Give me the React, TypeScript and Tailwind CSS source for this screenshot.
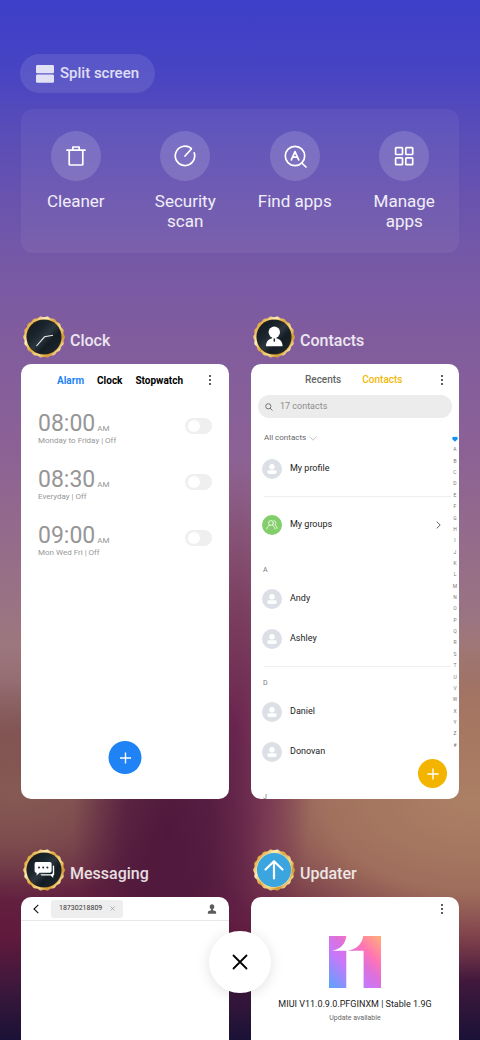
import type { ReactNode } from "react";

const alarms = [
  { time: "08:00", repeat: "Monday to Friday | Off" },
  { time: "08:30", repeat: "Everyday | Off" },
  { time: "09:00", repeat: "Mon Wed Fri | Off" },
];

const letters = "ABCDEFGHIJKLMNOPQRSTUVWXYZ#".split("");

// wavy outline of the gold badge, 18 bumps around a 42px box
const badgePoints = Array.from({ length: 180 }, (_, i) => {
  const angle = (i / 180) * Math.PI * 2;
  const radius = 20.3 + 0.5 * Math.cos(angle * 18);
  return `${(21 + radius * Math.cos(angle)).toFixed(2)},${(21 + radius * Math.sin(angle)).toFixed(2)}`;
}).join(" ");

const Badge = ({ id, blue, children }: { id: string; blue?: boolean; children: ReactNode }) => (
  <svg viewBox="0 0 42 42" className="size-[42px] shrink-0" aria-hidden="true">
    <defs>
      <linearGradient id={`${id}-gold`} x1="0" y1="0.1" x2="1" y2="0.9">
        <stop offset="0" stopColor="#c98a26" />
        <stop offset="0.14" stopColor="#e6b04a" />
        <stop offset="0.3" stopColor="#fff0b8" />
        <stop offset="0.45" stopColor="#dba53a" />
        <stop offset="0.62" stopColor="#f7dc8c" />
        <stop offset="0.78" stopColor="#d3962c" />
        <stop offset="0.9" stopColor="#ffeeb0" />
        <stop offset="1" stopColor="#c98a26" />
      </linearGradient>
      <linearGradient id={`${id}-dark`} x1="0" y1="0" x2="1" y2="1">
        <stop offset="0" stopColor="#10171d" />
        <stop offset="0.35" stopColor="#1b252d" />
        <stop offset="0.5" stopColor="#2b363e" />
        <stop offset="0.65" stopColor="#151d24" />
        <stop offset="1" stopColor="#1d272f" />
      </linearGradient>
    </defs>
    <polygon points={badgePoints} fill={`url(#${id}-gold)`} />
    <circle cx="21" cy="21" r="17.6" fill={blue ? "#f6e3a4" : "#3a2c12"} />
    <circle cx="21" cy="21" r="17.1" fill={blue ? "#3aa5df" : `url(#${id}-dark)`} />
    {children}
  </svg>
);

const Shortcut = ({ label, children }: { label: string; children: ReactNode }) => (
  <button type="button" className="flex flex-col items-center gap-2.5 text-[17px] leading-5 text-white/90">
    <span className="flex size-[50px] items-center justify-center rounded-full bg-white/15">
      <svg
        viewBox="0 0 24 24"
        className="size-6"
        fill="none"
        stroke="#fff"
        strokeWidth="1.7"
        strokeLinecap="round"
        strokeLinejoin="round"
        aria-hidden="true"
      >
        {children}
      </svg>
    </span>
    <span className="w-20">{label}</span>
  </button>
);

const AppWindow = ({ title, icon, children }: { title: string; icon: ReactNode; children: ReactNode }) => (
  <section>
    <div className="flex items-center gap-[5px] pl-0.5">
      {icon}
      <h2 className="pt-2 text-base font-medium text-white/85">{title}</h2>
    </div>
    <div className="relative mt-1.5 aspect-[208/435] overflow-hidden rounded-[10px] bg-white">{children}</div>
  </section>
);

const MoreButton = () => (
  <button type="button" aria-label="More" className="ml-auto flex h-full items-center">
    <svg viewBox="0 0 6 12" className="h-3 w-1.5" fill="#111" aria-hidden="true">
      <circle cx="3" cy="2" r="0.9" />
      <circle cx="3" cy="6" r="0.9" />
      <circle cx="3" cy="10" r="0.9" />
    </svg>
  </button>
);

const Plus = () => (
  <svg viewBox="0 0 12 12" className="size-3" stroke="#fff" strokeWidth="1.4" aria-hidden="true">
    <path d="M6 0.4V11.6M0.4 6H11.6" />
  </svg>
);

const Person = ({ name }: { name: string }) => (
  <li className="flex h-10 items-center gap-2 pl-[11px] text-[9px] text-[#222]">
    <svg viewBox="0 0 20 20" className="size-5" aria-hidden="true">
      <circle cx="10" cy="10" r="10" fill="#dcdfe5" />
      <circle cx="10" cy="7.7" r="2.7" fill="#fff" />
      <rect x="5.2" y="11.3" width="9.6" height="3.6" rx="1.8" fill="#fff" />
    </svg>
    {name}
  </li>
);

const SectionLetter = ({ letter }: { letter: string }) => (
  <h3 className="pl-3 text-[7px] leading-[17px] text-[#777]">{letter}</h3>
);

const ClockWindow = () => (
  <>
    <div className="flex h-8 items-center pr-4 pl-9 text-[10px] font-bold text-black">
      <div className="flex gap-[13px]">
        <button type="button" className="text-[#1e83f7]">Alarm</button>
        <button type="button">Clock</button>
        <button type="button">Stopwatch</button>
      </div>
      <MoreButton />
    </div>
    <ul className="pt-[5px]">
      {alarms.map((alarm) => (
        <li key={alarm.time}>
          <label className="flex h-14 items-center justify-between px-[17px] text-[#969696]">
            <span>
              <span className="flex items-baseline gap-0.5 text-[23px] leading-6">
                {alarm.time}
                <span className="text-[8px] leading-3">AM</span>
              </span>
              <span className="block text-[8px] leading-[10px]">{alarm.repeat}</span>
            </span>
            <input
              type="checkbox"
              role="switch"
              className="mb-1.5 h-4 w-[27px] appearance-none rounded-full bg-[#efefef] p-0.5 before:ml-px before:block before:size-3 before:rounded-full before:bg-white checked:bg-[#1e83f7] checked:before:ml-auto"
            />
          </label>
        </li>
      ))}
    </ul>
    <button
      type="button"
      aria-label="Add alarm"
      className="absolute bottom-[25px] left-1/2 flex size-[33px] -translate-x-1/2 items-center justify-center rounded-full bg-[#1f82f5]"
    >
      <Plus />
    </button>
  </>
);

const ContactsWindow = () => (
  <>
    <div className="flex h-[31px] items-center pr-3.5 pl-[54px] text-[10px] font-medium">
      <div className="flex gap-[21px]">
        <button type="button" className="text-[#666]">Recents</button>
        <button type="button" className="text-[#f4b806]">Contacts</button>
      </div>
      <MoreButton />
    </div>
    <label className="mx-[7px] flex h-[23px] items-center gap-[7px] rounded-full bg-[#ececec] pl-[7px]">
      <svg viewBox="0 0 8 8" className="size-2 shrink-0" fill="none" stroke="#666" strokeWidth="0.9" aria-hidden="true">
        <circle cx="3.3" cy="3.3" r="2.6" />
        <path d="M5.2 5.2L7.5 7.5" />
      </svg>
      <input
        type="text"
        aria-label="Search contacts"
        placeholder="17 contacts"
        className="w-full bg-transparent text-[9px] text-[#444] outline-none placeholder:text-[#8c8c8c]"
      />
    </label>
    <button type="button" className="mt-3 ml-[13px] flex h-4 items-center gap-[3px] text-[8px] text-[#666]">
      All contacts
      <svg viewBox="0 0 8 5" className="h-[5px] w-2" fill="none" stroke="#aaa" strokeWidth="0.7" aria-hidden="true">
        <path d="M0.5 0.5L4 4.2L7.5 0.5" />
      </svg>
    </button>
    <ul className="mt-[3px]">
      <Person name="My profile" />
    </ul>
    <div className="mt-[7px] mr-2 ml-[13px] border-t border-[#eee]" />
    <button type="button" className="mt-2 flex h-10 w-full items-center gap-2 pr-[18px] pl-[11px] text-[9px] text-[#222]">
      <svg viewBox="0 0 20 20" className="size-5" aria-hidden="true">
        <circle cx="10" cy="10" r="10" fill="#83ce6b" />
        <g fill="none" stroke="#fff" strokeWidth="0.8" strokeLinecap="round">
          <circle cx="9" cy="8" r="2.4" />
          <path d="M4.8 14C5 12 6.2 10.9 7.6 10.2M13.2 14C13 12 11.8 10.9 10.4 10.2M12 5.7C14.2 5.8 14.5 8.8 12.8 9.7C14.2 10.4 15 11.8 15.2 13.4" />
        </g>
      </svg>
      My groups
      <svg viewBox="0 0 5 8" className="ml-auto h-2 w-[5px]" fill="none" stroke="#555" strokeWidth="0.9" aria-hidden="true">
        <path d="M0.7 0.6L4.2 4L0.7 7.4" />
      </svg>
    </button>
    <div className="mt-[17px]">
      <SectionLetter letter="A" />
      <ul>
        <Person name="Andy" />
        <Person name="Ashley" />
      </ul>
    </div>
    <div className="mt-[7px] mr-2 ml-[13px] border-t border-[#eee]" />
    <div className="mt-2">
      <SectionLetter letter="D" />
      <ul>
        <Person name="Daniel" />
        <Person name="Donovan" />
      </ul>
    </div>
    <div className="mt-[17px]">
      <SectionLetter letter="J" />
    </div>
    <div className="absolute top-[70px] right-0 bottom-12 flex w-2 flex-col items-center justify-between text-[5px] leading-[11px] text-[#777]">
      <svg viewBox="0 0 6 6" className="my-0.5 size-1.5" fill="#1495f2" aria-hidden="true">
        <path d="M3 5.8L0.6 3.4C-0.6 2 0.9 -0.3 3 1.1C5.1 -0.3 6.6 2 5.4 3.4Z" />
      </svg>
      {letters.map((letter) => (
        <span key={letter}>{letter}</span>
      ))}
    </div>
    <button
      type="button"
      aria-label="Add contact"
      className="absolute right-3 bottom-[11px] flex size-[29px] items-center justify-center rounded-full bg-[#f3b400]"
    >
      <Plus />
    </button>
  </>
);

const MessagingWindow = () => (
  <div className="flex h-6 items-center border-b border-[#e8e8e8] px-3">
    <button type="button" aria-label="Back">
      <svg viewBox="0 0 6 10" className="h-2.5 w-1.5" fill="none" stroke="#111" strokeWidth="1.1" aria-hidden="true">
        <path d="M5.3 0.8L1 5L5.3 9.2" />
      </svg>
    </button>
    <div className="ml-3 flex h-[18px] items-center gap-2 rounded-[3px] bg-[#eee] px-2 text-[7px] text-[#333]">
      18730218809
      <button type="button" aria-label="Remove recipient">
        <svg viewBox="0 0 5 5" className="size-[5px]" stroke="#888" strokeWidth="0.6" aria-hidden="true">
          <path d="M0.4 0.4L4.6 4.6M4.6 0.4L0.4 4.6" />
        </svg>
      </button>
    </div>
    <button type="button" aria-label="Contact details" className="ml-auto">
      <svg viewBox="0 0 10 10" className="size-2.5" fill="#5c5c5c" aria-hidden="true">
        <path d="M5 0.2C3.6 0.2 2.7 1.3 2.7 2.7C2.7 3.7 3.3 4.8 4.1 5.2V6.2L1.6 7C1.1 7.3 0.8 8.4 0.8 9.8H9.2C9.2 8.4 8.9 7.3 8.4 7L5.9 6.2V5.2C6.7 4.8 7.3 3.7 7.3 2.7C7.3 1.3 6.4 0.2 5 0.2Z" />
      </svg>
    </button>
  </div>
);

const UpdaterWindow = () => (
  <>
    <div className="flex h-6 pr-3.5">
      <MoreButton />
    </div>
    <div className="mt-[15px] flex flex-col items-center">
      <svg viewBox="0 0 52 52" className="size-[52px]" role="img" aria-label="MIUI 11">
        <defs>
          <linearGradient id="miui" x1="0" y1="1" x2="1" y2="0">
            <stop offset="0" stopColor="#58a4ff" />
            <stop offset="0.38" stopColor="#c878fa" />
            <stop offset="0.55" stopColor="#dc70dc" />
            <stop offset="0.72" stopColor="#ff74b4" />
            <stop offset="1" stopColor="#ffb077" />
          </linearGradient>
        </defs>
        <path
          fill="url(#miui)"
          d="M0 0H17.3C16.5 8 11 13.7 3 14.7H17.3V52H0ZM34.3 0H52V52H34.6V14.7H18.7C27 13.7 33 8 34.3 0Z"
        />
      </svg>
      <p className="mt-2.5 text-[9px] leading-3 whitespace-nowrap text-[#222]">MIUI V11.0.9.0.PFGINXM | Stable 1.9G</p>
      <p className="mt-0.5 text-[7px] leading-3 text-[#666]">Update available</p>
    </div>
  </>
);

const App = () => {
  return (
    <main className="relative h-screen overflow-hidden bg-[radial-gradient(ellipse_95px_190px_at_35%_80%,#4d173cf2_0%,#4d173cc0_45%,transparent_100%),radial-gradient(ellipse_80px_270px_at_49%_70%,#6c2751_0%,#6c2751b0_45%,transparent_100%),radial-gradient(ellipse_285px_180px_at_98%_77%,#ab8064_0%,#a87860e0_50%,transparent_100%),radial-gradient(ellipse_170px_110px_at_3%_76%,#865a54_0%,#80534fc0_50%,transparent_100%),linear-gradient(180deg,#3d3fca_0%,#4844c2_7%,#5a4db7_13%,#7257a9_23%,#805c9e_32%,#8b6196_43%,#946a8c_51%,#9d777e_62%,#8f666a_68%,#79404f_77%,#632340_85%,#611a3d_90%,#3c183c_95%,#1a1136_100%)] px-[21px] pt-[54px] font-['Roboto',sans-serif]">
      <button
        type="button"
        className="-ml-px flex h-[39px] items-center gap-1.5 rounded-full bg-white/10 px-4 text-[15px] font-medium text-white/80"
      >
        <svg viewBox="0 0 18 18" className="size-[18px]" fill="#fff" fillOpacity="0.82" aria-hidden="true">
          <rect y="0" width="18" height="8.3" rx="1.2" />
          <rect y="9.5" width="18" height="8.3" rx="1.2" />
        </svg>
        Split screen
      </button>

      <div className="mt-4 grid grid-cols-4 items-start rounded-xl bg-white/5 py-[22px]">
        <Shortcut label="Cleaner">
          <path d="M3 6.2H21M8.8 6V3H15.2V6M5.2 6.4V20.2Q5.2 21 6 21H18Q18.8 21 18.8 20.2V6.4" />
        </Shortcut>
        <Shortcut label="Security scan">
          <path d="M18.2 4.4A9.7 9.7 0 1 0 21.2 8.8M12 12L18.4 5" />
        </Shortcut>
        <Shortcut label="Find apps">
          <circle cx="12" cy="12" r="9.7" />
          <path d="M18.8 19L23 23M8.3 15.8L12 7.6L15.7 15.8M9.5 13.2H14.5" />
        </Shortcut>
        <Shortcut label="Manage apps">
          <rect x="3.6" y="3.6" width="6.9" height="6.9" rx="0.7" />
          <rect x="13.8" y="3.6" width="6.9" height="6.9" rx="0.7" />
          <rect x="3.6" y="13.8" width="6.9" height="6.9" rx="0.7" />
          <rect x="13.8" y="13.8" width="6.9" height="6.9" rx="0.7" />
        </Shortcut>
      </div>

      {/* open apps */}
      <div className="mt-[63px] grid grid-cols-2 gap-x-[22px] gap-y-[50px]">
        <AppWindow
          title="Clock"
          icon={
            <Badge id="clock">
              <path d="M13.5 30L21.5 20.8L30 19.3" fill="none" stroke="#eee" strokeWidth="1.1" />
            </Badge>
          }
        >
          <ClockWindow />
        </AppWindow>
        <AppWindow
          title="Contacts"
          icon={
            <Badge id="contacts">
              <circle cx="21.3" cy="16.2" r="5.7" fill="#fff" />
              <path d="M13 30.2C13 25.5 15.5 23.2 19.2 22.2V20H23.4V22.2C27 23.2 29.6 25.5 29.6 30.2Z" fill="#fff" />
              <path d="M20.4 22.4H22.2L21.9 23.4L22.2 25L21.3 26L20.4 25L20.7 23.4Z" fill="#1b252d" />
            </Badge>
          }
        >
          <ContactsWindow />
        </AppWindow>
        <AppWindow
          title="Messaging"
          icon={
            <Badge id="messaging">
              <path d="M29.8 16.5H30.2Q31.2 16.5 31.2 17.5V25.5Q31.2 26.5 30.2 26.5V29L27.6 26.5H19Q17.6 26.5 17.6 25.2H28Q29.8 25.2 29.8 23.6Z" fill="#fff" />
              <path d="M13.2 13H26.8Q28.6 13 28.6 14.8V22Q28.6 23.8 26.8 23.8H16.6L13.6 26.6V23.8H13.2Q11.6 23.8 11.6 22V14.8Q11.6 13 13.2 13Z" fill="#fff" />
              <circle cx="16" cy="18.4" r="1" fill="#1b252d" />
              <circle cx="20.2" cy="18.4" r="1" fill="#1b252d" />
              <circle cx="24.4" cy="18.4" r="1" fill="#1b252d" />
            </Badge>
          }
        >
          <MessagingWindow />
        </AppWindow>
        <AppWindow
          title="Updater"
          icon={
            <Badge id="updater" blue>
              <path
                d="M21 29.5V12.5M12.5 20.5L21 12.2L29.5 20.5"
                fill="none"
                stroke="#fff"
                strokeWidth="2.2"
                strokeLinecap="round"
                strokeLinejoin="round"
              />
            </Badge>
          }
        >
          <UpdaterWindow />
        </AppWindow>
      </div>

      <button
        type="button"
        aria-label="Close all"
        className="absolute bottom-[47px] left-1/2 flex size-[62px] -translate-x-1/2 items-center justify-center rounded-full bg-white shadow-[0_2px_14px_rgba(0,0,0,0.12)]"
      >
        <svg viewBox="0 0 16 16" className="size-4" stroke="#000" strokeWidth="1.8" strokeLinecap="round" aria-hidden="true">
          <path d="M1.5 1.5L14.5 14.5M14.5 1.5L1.5 14.5" />
        </svg>
      </button>
    </main>
  );
};

export default App;
